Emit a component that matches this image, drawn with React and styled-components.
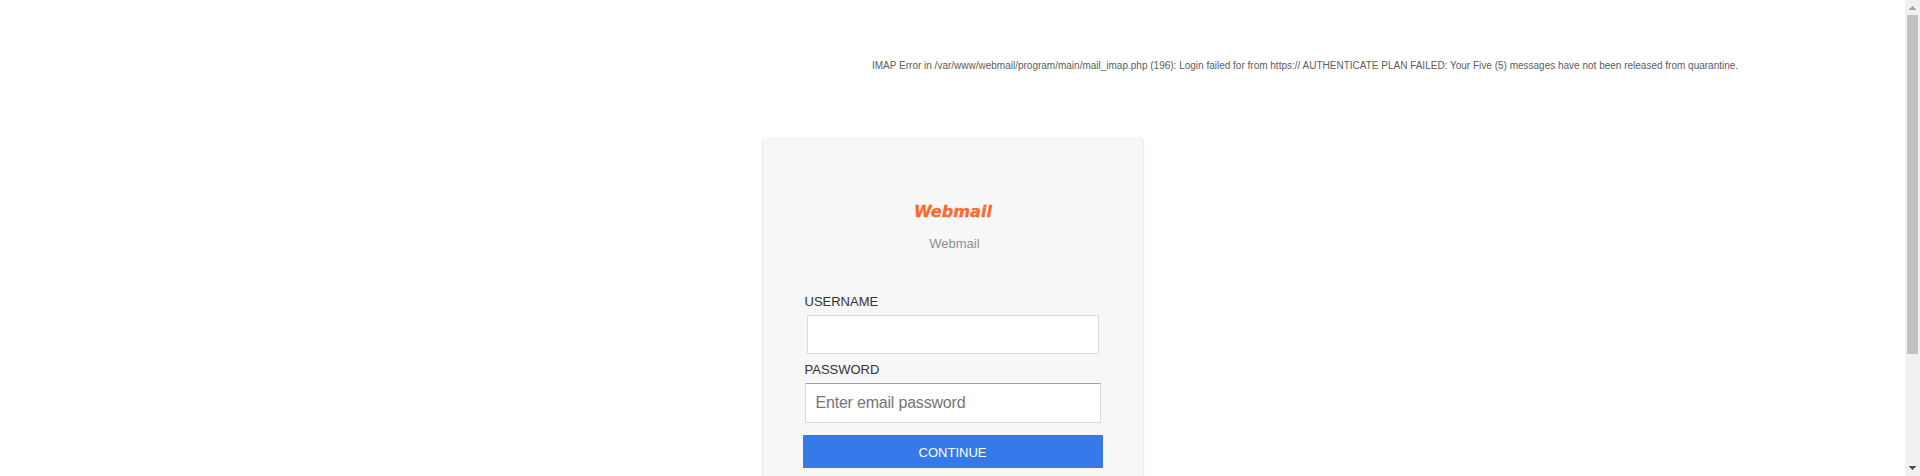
import React from 'react';
import styled, { createGlobalStyle } from 'styled-components';

const GlobalStyle = createGlobalStyle`
  html, body {
    margin: 0;
    height: 476px;
    overflow: hidden;
    background: #fff;
    font-family: "Liberation Sans", Arial, sans-serif;
  }
  * { box-sizing: border-box; }
`;

const Window = styled.div`
  display: flex;
  width: 100%;
  height: 476px;
  overflow: hidden;
`;

const Page = styled.main`
  flex: 1;
  height: 476px;
  overflow: hidden;
`;

const Notice = styled.p`
  margin: 0;
  height: 137px;
  padding: 59px 0 0 872px;
  font-size: 10px;
  line-height: 13px;
  white-space: nowrap;
  color: #5c5c5c;
`;

const Card = styled.form`
  width: 380px;
  height: 420px;
  margin: 0 auto;
  padding: 68px 40px 0;
  display: flex;
  flex-direction: column;
  background: #f7f7f7;
  border-radius: 2px;
  box-shadow: 0 2px 2px rgba(0, 0, 0, 0.3);
`;

const Logo = styled.svg`
  display: block;
  flex: none;
  width: 80px;
  height: 15px;
  margin-left: 110.5px;
  overflow: visible;
`;

const Subtitle = styled.div`
  height: 15px;
  margin: 16px 0 0 126.8px;
  font-size: 13px;
  line-height: 15px;
  color: #8d8d93;
`;

const Label = styled.label`
  margin: ${(p) => p.$top}px 0 0 2px;
  height: 15px;
  font-size: 13px;
  line-height: 15px;
  color: #333;
`;

const Field = styled.input`
  flex: none;
  align-self: center;
  width: ${(p) => p.$width}px;
  height: ${(p) => p.$height}px;
  margin: 6px 0 0;
  padding: 0 10px;
  border: 1px solid #d9d9d9;
  border-top-color: ${(p) => p.$topColor};
  border-radius: 0;
  outline: none;
  background: #fff;
  font-family: inherit;
  font-size: 16px;
  letter-spacing: -0.2px;
  &::placeholder { color: #757575; }
`;

const Button = styled.button`
  flex: none;
  width: 300px;
  height: 33px;
  margin: 12px 0 0;
  padding: 2px 0 0;
  border: 0;
  border-radius: 1px;
  background: #357ae8;
  color: #fff;
  font-family: inherit;
  font-size: 13px;
`;

const Scrollbar = styled.div`
  display: flex;
  flex-direction: column;
  align-items: center;
  width: 15px;
  height: 476px;
  background: #f1f1f1;
`;

const Arrow = styled.svg`
  display: block;
  flex: none;
  width: 15px;
  height: 15px;
`;

const Thumb = styled.div`
  width: 11px;
  height: 339px;
  margin-bottom: auto;
  background: #c1c1c1;
`;

export default function App() {
  return (
    <Window>
      <GlobalStyle />
      <Page>
        <Notice>
          IMAP Error in /var/www/webmail/program/main/mail_imap.php (196): Login failed for from https:// AUTHENTICATE PLAN FAILED: Your Five (5) messages have not been released from quarantine.
        </Notice>
        <Card onSubmit={(e) => e.preventDefault()}>
          <Logo viewBox="0 0 80 15">
            <text
              x="1" y="12" fontSize="16" fontWeight="700" fontStyle="italic"
              fontFamily="'DejaVu Sans', sans-serif" fill="#f96c2d"
              stroke="#f96c2d" strokeWidth="0.3"
              textLength="78" lengthAdjust="spacingAndGlyphs"
            >
              Webmail
            </text>
          </Logo>
          <Subtitle>Webmail</Subtitle>
          <Label htmlFor="user" $top={43}>USERNAME</Label>
          <Field id="user" type="text" $width={292} $height={39} $topColor="#d9d9d9" />
          <Label htmlFor="pass" $top={8}>PASSWORD</Label>
          <Field id="pass" type="password" placeholder="Enter email password" $width={296} $height={40} $topColor="#a0a0a0" />
          <Button type="submit">CONTINUE</Button>
        </Card>
      </Page>
      <Scrollbar>
        <Arrow viewBox="0 0 15 15" shapeRendering="crispEdges">
          <path d="M7 6h1v1h1v1h1v1h1v1H4V9h1V8h1V7h1z" fill="#a3a3a3" />
        </Arrow>
        <Thumb />
        <Arrow viewBox="0 0 15 15" shapeRendering="crispEdges">
          <path d="M4 5h7v1h-1v1H9v1H8v1H7V8H6V7H5V6H4z" fill="#505050" />
        </Arrow>
      </Scrollbar>
    </Window>
  );
}
